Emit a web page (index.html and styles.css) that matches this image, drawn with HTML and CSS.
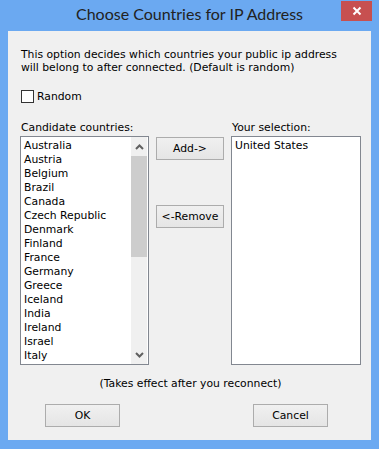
FILE: index.html
```html
<!DOCTYPE html>
<html lang="en">
<head>
  <meta charset="UTF-8" />
  <title>Choose Countries for IP Address</title>
  <link rel="stylesheet" href="styles.css">
</head>
<body>
  <div class="window">
    <div class="titlebar">
      <span></span>
      <span class="title">Choose Countries for IP Address</span>
      <button class="close" title="Close">
        <svg width="10" height="10" viewBox="0 0 10 10">
          <path d="M1.5 1.5 L8.5 8.5 M8.5 1.5 L1.5 8.5" stroke="#fff" stroke-width="2" fill="none" />
        </svg>
      </button>
    </div>

    <div class="client">
      <p class="intro">This option decides which countries your public ip address<br>will belong to after connected. (Default is random)</p>

      <label class="check">
        <span class="box"></span>
        Random
      </label>

      <div class="picker">
        <div class="cap">Candidate countries:</div>
        <div></div>
        <div class="cap">Your selection:</div>

        <div class="list">
          <ul class="items">
            <li>Australia</li>
            <li>Austria</li>
            <li>Belgium</li>
            <li>Brazil</li>
            <li>Canada</li>
            <li>Czech Republic</li>
            <li>Denmark</li>
            <li>Finland</li>
            <li>France</li>
            <li>Germany</li>
            <li>Greece</li>
            <li>Iceland</li>
            <li>India</li>
            <li>Ireland</li>
            <li>Israel</li>
            <li>Italy</li>
          </ul>
          <div class="scrollbar">
            <div class="arrow">
              <svg width="9" height="6" viewBox="0 0 9 6"><path d="M1 5 L4.5 1.5 L8 5" stroke="#606060" stroke-width="2" fill="none" /></svg>
            </div>
            <div class="thumb"></div>
            <div class="track"></div>
            <div class="arrow">
              <svg width="9" height="6" viewBox="0 0 9 6"><path d="M1 1 L4.5 4.5 L8 1" stroke="#606060" stroke-width="2" fill="none" /></svg>
            </div>
          </div>
        </div>

        <div class="actions">
          <button class="btn">Add-&gt;</button>
          <button class="btn">&lt;-Remove</button>
        </div>

        <div class="list">
          <ul class="items">
            <li>United States</li>
          </ul>
        </div>
      </div>

      <p class="note">(Takes effect after you reconnect)</p>

      <div class="footer">
        <button class="btn wide">OK</button>
        <button class="btn wide">Cancel</button>
      </div>
    </div>
  </div>
</body>
</html>
```

FILE: styles.css
```css
* {
  box-sizing: border-box;
}
body {
  margin: 0;
  font-family: "DejaVu Sans", Tahoma, sans-serif;
  font-size: 10.8px;
  color: #000;
}
.window {
  width: 379px;
  height: 449px;
  background: #6ba9f1;
  display: flex;
  flex-direction: column;
}
.titlebar {
  height: 31px;
  display: grid;
  grid-template-columns: 1fr auto 1fr;
}
.title {
  font-family: Lato, "Liberation Sans", sans-serif;
  font-size: 16px;
  line-height: 20px;
  padding-top: 4px;
  color: #222;
}
.close {
  justify-self: end;
  align-self: start;
  width: 31px;
  height: 20px;
  margin: 1px 7px 0 0;
  padding: 0;
  border: none;
  background: #c75050;
  display: flex;
  align-items: center;
  justify-content: center;
}
.client {
  flex: 1;
  margin: 0 8px 9px;
  background: #f0f0f0;
  padding: 17px 10px 0 12px;
}
.intro {
  margin: 0 0 0 1px;
  line-height: 13px;
}
.check {
  display: flex;
  align-items: center;
  gap: 3px;
  height: 13px;
  margin: 16px 0 0 1px;
}
.box {
  width: 13px;
  height: 13px;
  border: 1px solid #333;
  background: #fff;
}
.picker {
  margin-top: 18px;
  display: grid;
  grid-template-columns: 129px 68px 130px;
  grid-template-rows: 13px 229px;
  column-gap: 7px;
  row-gap: 2px;
}
.cap {
  line-height: 13px;
  padding-left: 1px;
  white-space: nowrap;
}
.list {
  border: 1px solid #828790;
  background: #fff;
  display: flex;
  overflow: hidden;
}
.items {
  flex: 1;
  list-style: none;
  margin: 0;
  padding: 2px 0 0 3px;
  line-height: 14px;
  white-space: nowrap;
  overflow: hidden;
}
.scrollbar {
  width: 16px;
  margin-right: 1px;
  background: #f0f0f0;
  display: flex;
  flex-direction: column;
}
.arrow {
  height: 19px;
  display: flex;
  align-items: center;
  justify-content: center;
}
.thumb {
  height: 101px;
  background: #cdcdcd;
}
.track {
  flex: 1;
}
.actions {
  display: flex;
  flex-direction: column;
  gap: 45px;
  padding-top: 1px;
}
.btn {
  height: 23px;
  padding: 0;
  border: 1px solid #acacac;
  border-radius: 0;
  background: linear-gradient(#f0f0f0, #e5e5e5);
  font-family: inherit;
  font-size: 10.8px;
  color: #000;
}
.note {
  margin: 12px 0 0;
  line-height: 13px;
  text-align: center;
}
.footer {
  margin-top: 14px;
  display: flex;
  justify-content: space-between;
  padding: 0 33px 0 25px;
}
.wide {
  width: 75px;
}
```
